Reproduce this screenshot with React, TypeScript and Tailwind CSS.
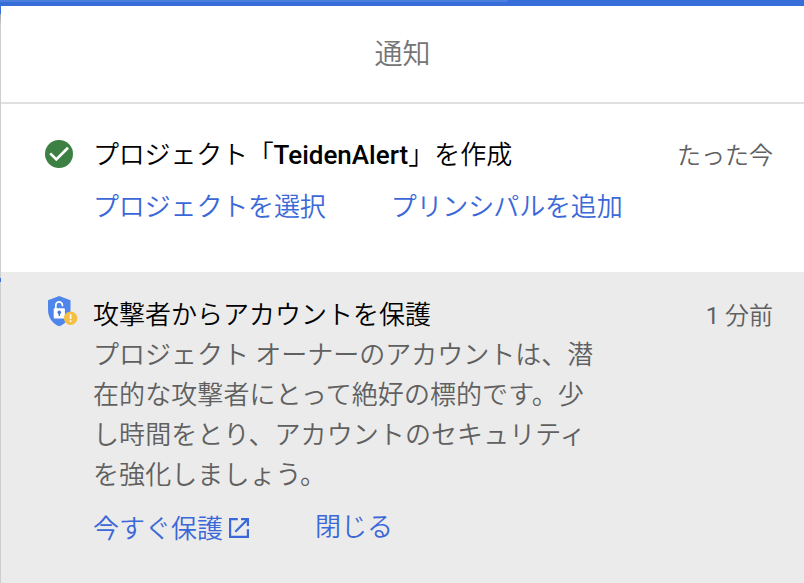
const cjk = "font-[Roboto,'Noto_Sans_CJK_JP_DemiLight','Noto_Sans_CJK_JP',sans-serif]";

function CheckIcon() {
  return (
    <svg className="mt-[2px] ml-[15px] h-7 w-7 shrink-0" viewBox="0 0 28 28">
      <circle cx="14" cy="14" r="14" fill="#3c8043" />
      <path d="M5.2 13.4 11.3 19.4 23 7.8" fill="none" stroke="#fff" strokeWidth="2.7" />
    </svg>
  );
}

function ShieldIcon() {
  return (
    <svg className="ml-[18px] h-8 w-[30px] shrink-0" viewBox="0 0 30 32">
      <path d="M11.2 0 22.5 4.2V13.5C22.5 21.5 18 28 11.2 30.2 4.5 28 0 21.5 0 13.5V4.2Z" fill="#4f86ec" />
      <path d="M7.8 13V9.2a3.3 3.3 0 0 1 6.6 0v1" fill="none" stroke="#fff" strokeWidth="1.7" />
      <rect x="5.7" y="12.2" width="11.2" height="10.4" rx="1" fill="#fff" />
      <circle cx="11.3" cy="16.4" r="1.8" fill="#4277d8" />
      <path d="M10.6 17h1.4v3h-1.4z" fill="#4277d8" />
      <circle cx="22.6" cy="22.2" r="6.7" fill="#f4bf42" />
      <path d="M21.8 18.3h1.6v4.8h-1.6zM21.8 24.3h1.6v1.6h-1.6z" fill="#fff" />
    </svg>
  );
}

function ExternalIcon() {
  return (
    <svg className="-mt-[3px] ml-[6px] h-5 w-5" viewBox="0 0 20 20" fill="none" stroke="#3b68d8" strokeWidth="2.2">
      <path d="M8.8 1.1H1.1v17.8h17.8v-7.7M12 1.1h6.9V8M18.5 1.5 6.3 13.7" />
    </svg>
  );
}

export default function App() {
  return (
    <div className={`${cjk} h-[583px] w-[804px] overflow-hidden bg-white text-[26px] font-[350] leading-10`} lang="ja">
      <div className="h-[6px] bg-[#366dd8]">
        <div className="h-[2px] w-[508px] rounded-br-full bg-[#4a7fdd]" />
      </div>
      <div className="flex h-[577px]">
        <div className="w-px shrink-0 bg-[#cecece]">
          <div className="h-2 bg-[#366dd8]" />
          <div className="h-3 bg-linear-to-b from-[#a5a5a5] to-[#cecece]" />
          <div className="mt-[252px] h-1 bg-[#366dd8]" />
        </div>
        <div className="flex grow flex-col">
          <header className="flex h-[98px] items-center justify-center border-b-2 border-[#e0e0e0] pt-[2px] text-[28px] text-[#757575]">
            <h1>通知</h1>
          </header>
          <section className="flex h-[168px] pt-[34px] pl-[29px]">
            <CheckIcon />
            <div className="-mt-[3px] ml-[20px] w-[560px] whitespace-nowrap">
              <h2 className="text-black">
                <span className="tracking-[-0.2px]">プロジェクト「</span><span className="font-medium">TeidenAlert</span>」を作成
              </h2>
              <div className="mt-[12px] flex gap-[65px] tracking-[-0.15px] text-[#3b68d8]">
                <a>プロジェクトを選択</a>
                <a>プリンシパルを追加</a>
              </div>
            </div>
            <time className="-mt-[2px] mr-[31px] ml-auto whitespace-nowrap text-2xl leading-10 text-[#606060]">たった今</time>
          </section>
          <section className="flex grow bg-[#ebebeb] pt-6 pl-[29px]">
            <ShieldIcon />
            <div className="-mt-[1px] ml-[15px] w-[560px] whitespace-nowrap">
              <h2 className="text-black">攻撃者からアカウントを保護</h2>
              <p className="text-[#606060]">
                プロジェクト オーナーのアカウントは、潜<br />
                <span className="tracking-[0.08px]">
                  在的な攻撃者にとって絶好の標的です。少<br />
                  し時間をとり、アカウントのセキュリティ<br />
                  を強化しましょう。
                </span>
              </p>
              <div className="mt-[14px] flex text-[#3b68d8]">
                <a className="flex items-center">今すぐ保護<ExternalIcon /></a>
                <a className="-mt-[2px] ml-[66px]">閉じる</a>
              </div>
            </div>
            <time className="mr-[31px] ml-auto whitespace-nowrap text-2xl leading-10 text-[#606060]">
              <span className="font-normal">1</span> 分前
            </time>
          </section>
        </div>
      </div>
    </div>
  );
}
